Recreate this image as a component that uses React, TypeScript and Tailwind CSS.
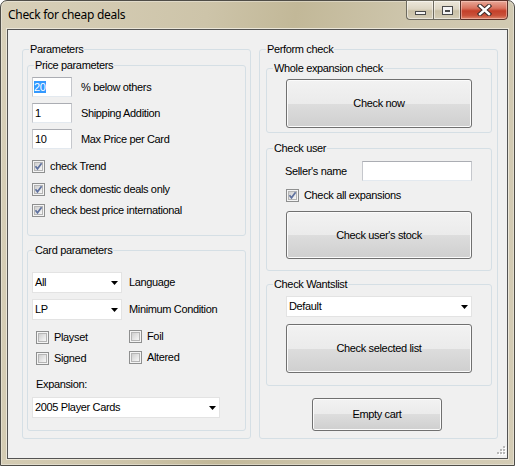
import React from "react";

function GroupBox({ title, className, children }: { title: string; className: string; children?: React.ReactNode }) {
  return (
    <fieldset className={`border border-[#d5dfe5] rounded-[3px] ${className}`}>
      <legend className="ml-[6px] px-[1px] leading-[13px]">{title}</legend>
      {children}
    </fieldset>
  );
}

function Btn({ label, className }: { label: string; className: string }) {
  return (
    <div
      className={`flex items-center justify-center rounded-[3px] border border-[#707070] bg-[linear-gradient(#f2f2f2_0%,#ebebeb_50%,#dddddd_50%,#cfcfcf_100%)] shadow-[inset_0_0_0_1px_#fbfbfb] ${className}`}
    >
      {label}
    </div>
  );
}

function TextBox({ children, className }: { children?: React.ReactNode; className: string }) {
  return (
    <div
      className={`flex items-center bg-white border border-[#c5c7cc] border-t-[#abadb3] border-b-[#e3e9ef] pl-[1px] ${className}`}
    >
      {children}
    </div>
  );
}

function Combo({ value, className }: { value: string; className: string }) {
  return (
    <div className={`flex items-center justify-between bg-white border border-[#e3e3e3] pl-[2px] pr-[3px] ${className}`}>
      <span>{value}</span>
      <svg width="7" height="4" viewBox="0 0 7 4">
        <path d="M0 0H7L3.5 4Z" fill="#000" />
      </svg>
    </div>
  );
}

function CheckBox({ checked, label, className }: { checked?: boolean; label: string; className?: string }) {
  return (
    <div className={`flex items-center h-[13px] ${className ?? ""}`}>
      <span className="flex-none w-[13px] h-[13px] border border-[#8e8f8f] bg-[#f4f4f4] p-[1px]">
        <span className="relative block w-full h-full border border-[#b5b5b5] bg-[linear-gradient(135deg,#cfcfcf,#f7f7f7)]">
          {checked && (
            <svg className="absolute left-[-1px] top-[-1px]" width="9" height="9" viewBox="0 0 9 9">
              <path d="M1.5 4.2L3.5 6.8L7.6 1.3" stroke="#5f719e" strokeWidth="1.7" fill="none" />
            </svg>
          )}
        </span>
      </span>
      <span className="ml-[5px] leading-[13px]">{label}</span>
    </div>
  );
}

function CaptionButtons() {
  return (
    <div className="flex -mt-[1px] h-[20px]">
      <div className="w-[27px] h-full border border-[#6d6a5f] border-r-0 rounded-bl-[4px] bg-[linear-gradient(#ece7da_0%,#ddd6c4_45%,#c9c0a6_55%,#d4ccb6_100%)] shadow-[inset_0_0_0_1px_rgba(255,255,255,0.5)] flex items-end justify-center pb-[4px]">
        <span className="block w-[11px] h-[4px] border border-[#4a4a4a] bg-[#f4f4f4]" />
      </div>
      <div className="w-[27px] h-full border border-[#6d6a5f] border-r-0 bg-[linear-gradient(#ece7da_0%,#ddd6c4_45%,#c9c0a6_55%,#d4ccb6_100%)] shadow-[inset_0_0_0_1px_rgba(255,255,255,0.5)] flex items-center justify-center">
        <span className="block w-[11px] h-[9px] border border-[#4a4a4a] bg-[#f4f4f4] p-[2px] pt-[3px]">
          <span className="block w-full h-full border border-[#4a4a4a] bg-[#d9d4c5]" />
        </span>
      </div>
      <div className="w-[48px] h-full border border-[#5b3129] rounded-br-[4px] bg-[linear-gradient(#e8a898_0%,#d9735f_40%,#c4402a_55%,#c9513a_80%,#e0876b_100%)] shadow-[inset_0_0_0_1px_rgba(255,220,210,0.45)] flex items-center justify-center">
        <svg width="15" height="12" viewBox="0 0 15 12">
          <path d="M3 2L12 10M12 2L3 10" stroke="#3a2a28" strokeWidth="4.4" strokeLinecap="square" />
          <path d="M3 2L12 10M12 2L3 10" stroke="#ffffff" strokeWidth="2.4" strokeLinecap="square" />
        </svg>
      </div>
    </div>
  );
}

export default function App() {
  return (
    <div
      className="w-[515px] h-[466px] flex flex-col border border-[#4f4d47] rounded-t-[7px] px-[6px] pb-[6px] bg-[linear-gradient(100deg,#d8d0b9_0%,#cdc4a9_35%,#c2b898_50%,#cec6ad_70%,#d4ccb5_100%)] shadow-[inset_0_0_0_1px_rgba(255,255,255,0.35)] font-['Liberation_Sans',Arial,sans-serif] text-[11px] tracking-[-0.35px] text-black"
    >
      <div className="h-[28px] flex-none flex items-start justify-between">
        <span className="pl-[1px] pt-[6px] font-['Noto_Sans',sans-serif] text-[12px] tracking-[-0.3px] leading-[16px] text-black">
          Check for cheap deals
        </span>
        <CaptionButtons />
      </div>

      <div className="relative h-[430px] flex-none border border-[#535353] bg-[#f0f0f0] shadow-[0_0_0_1px_#ebe6d8]">
        <div className="flex pl-[14px] pt-[13px] gap-[8px]">
          {/* left column */}
          <GroupBox title="Parameters" className="w-[229px] h-[396px]">
            <GroupBox title="Price parameters" className="ml-[4px] mt-[3px] w-[219px] h-[177px]">
              <div className="mt-[5px] ml-[4px] flex items-center">
                <TextBox className="w-[40px] h-[20px]">
                  <span className="bg-[#3399ff] text-white leading-[12px]">20</span>
                </TextBox>
                <span className="ml-[9px]">% below others</span>
              </div>
              <div className="mt-[6px] ml-[4px] flex items-center">
                <TextBox className="w-[40px] h-[20px]">
                  <span className="pl-[1px]">1</span>
                </TextBox>
                <span className="ml-[9px]">Shipping Addition</span>
              </div>
              <div className="mt-[6px] ml-[4px] flex items-center">
                <TextBox className="w-[40px] h-[20px]">
                  <span className="pl-[1px]">10</span>
                </TextBox>
                <span className="ml-[9px]">Max Price per Card</span>
              </div>
              <CheckBox checked label="check Trend" className="mt-[11px] ml-[4px]" />
              <CheckBox checked label="check domestic deals only" className="mt-[10px] ml-[4px]" />
              <CheckBox checked label="check best price international" className="mt-[8px] ml-[4px]" />
            </GroupBox>

            <GroupBox title="Card parameters" className="ml-[4px] mt-[8px] w-[219px] h-[187px]">
              <div className="mt-[15px] ml-[4px] flex items-center">
                <Combo value="All" className="w-[90px] h-[21px]" />
                <span className="ml-[7px]">Language</span>
              </div>
              <div className="mt-[6px] ml-[4px] flex items-center">
                <Combo value="LP" className="w-[90px] h-[21px]" />
                <span className="ml-[7px]">Minimum Condition</span>
              </div>
              <div className="mt-[11px] ml-[8px] flex">
                <CheckBox label="Playset" className="w-[93px]" />
                <CheckBox label="Foil" className="-mt-[1px]" />
              </div>
              <div className="mt-[8px] ml-[8px] flex">
                <CheckBox label="Signed" className="w-[93px]" />
                <CheckBox label="Altered" className="-mt-[1px]" />
              </div>
              <div className="mt-[13px] ml-[8px] leading-[13px]">Expansion:</div>
              <Combo value="2005 Player Cards" className="mt-[6px] ml-[4px] w-[188px] h-[21px]" />
            </GroupBox>
          </GroupBox>

          {/* right column */}
          <GroupBox title="Perform check" className="w-[239px] h-[396px]">
            <GroupBox title="Whole expansion check" className="ml-[6px] mt-[6px] w-[226px] h-[71px]">
              <Btn label="Check now" className="mt-[4px] ml-[19px] w-[186px] h-[49px]" />
            </GroupBox>

            <GroupBox title="Check user" className="ml-[6px] mt-[9px] w-[226px] h-[129px]">
              <div className="mt-[6px] ml-[18px] flex items-center">
                <span className="w-[77px]">Seller's name</span>
                <TextBox className="w-[110px] h-[20px]" />
              </div>
              <CheckBox checked label="Check all expansions" className="mt-[8px] ml-[19px]" />
              <Btn label="Check user's stock" className="mt-[9px] ml-[19px] w-[186px] h-[48px]" />
            </GroupBox>

            <GroupBox title="Check Wantslist" className="ml-[6px] mt-[7px] w-[226px] h-[108px]">
              <Combo value="Default" className="mt-[5px] ml-[19px] w-[186px] h-[21px]" />
              <Btn label="Check selected list" className="mt-[7px] ml-[19px] w-[186px] h-[49px]" />
            </GroupBox>

            <Btn label="Empty cart" className="mt-[12px] ml-[52px] w-[130px] h-[33px]" />
          </GroupBox>
        </div>

        {/* size grip */}
        <svg className="absolute right-[1px] bottom-[1px]" width="11" height="11" viewBox="0 0 11 11">
          {[
            [8, 0],
            [8, 3],
            [5, 3],
            [8, 6],
            [5, 6],
            [2, 6],
          ].map(([x, y], i) => (
            <g key={i}>
              <rect x={x + 1} y={y + 1} width="2" height="2" fill="#ffffff" />
              <rect x={x} y={y} width="2" height="2" fill="#b8b8b8" />
            </g>
          ))}
        </svg>
      </div>
    </div>
  );
}
